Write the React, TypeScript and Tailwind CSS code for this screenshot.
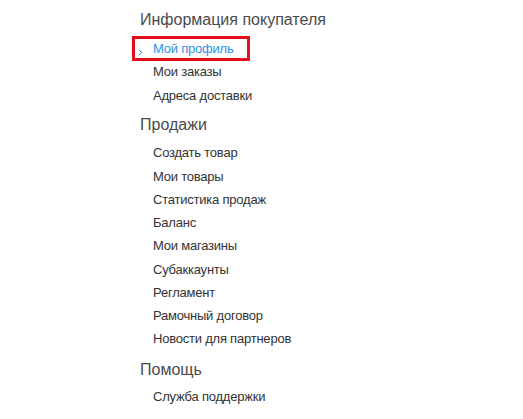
import React from "react";

const sales = [
  "Создать товар",
  "Мои товары",
  "Статистика продаж",
  "Баланс",
  "Мои магазины",
  "Субаккаунты",
  "Регламент",
  "Рамочный договор",
  "Новости для партнеров",
];

function Item({ label }: { label: string }) {
  return (
    <li className="h-[23.25px] leading-[23.25px] text-[13px] tracking-[-0.22px] text-[#333333]">{label}</li>
  );
}

export default function App() {
  return (
    <div
      className="w-[523px] h-[419px] bg-white overflow-hidden pl-[140px]"
      style={{ fontFamily: '"Liberation Sans", Arial, sans-serif' }}
    >
      <h2 className="mt-[8px] h-[24px] leading-[24px] text-[16px] text-[#4a4a4a]">Информация покупателя</h2>
      <ul className="mt-[4px] pl-[13px]">
        <li className="-ml-[21px] w-[118px] h-[25px] border-[3px] border-[#e3101b] flex items-center text-[13px] tracking-[-0.22px] text-[#2f8fe8]">
          <svg width="5" height="7" viewBox="0 0 5 7" className="ml-[3px] mt-[7px] mr-[10px] shrink-0" fill="none">
            <path d="M0.8 0.8 L4 3.5 L0.8 6.2" stroke="#2f8fe8" strokeWidth="1" />
          </svg>
          <span className="leading-[19px]">Мой профиль</span>
        </li>
        <li className="h-[24px] leading-[24px] text-[13px] tracking-[-0.22px] text-[#333333] -mt-[1px]">Мои заказы</li>
        <li className="h-[24px] leading-[24px] text-[13px] tracking-[-0.22px] text-[#333333]">Адреса доставки</li>
      </ul>
      <h2 className="mt-[5px] h-[24px] leading-[24px] text-[16px] text-[#4a4a4a]">Продажи</h2>
      <ul className="mt-[4.4px] pl-[13px]">
        {sales.map((s) => (
          <Item key={s} label={s} />
        ))}
      </ul>
      <h2 className="mt-[7.4px] h-[24px] leading-[24px] text-[16px] text-[#4a4a4a]">Помощь</h2>
      <ul className="mt-[3.4px] pl-[13px]">
        <Item label="Служба поддержки" />
      </ul>
    </div>
  );
}
